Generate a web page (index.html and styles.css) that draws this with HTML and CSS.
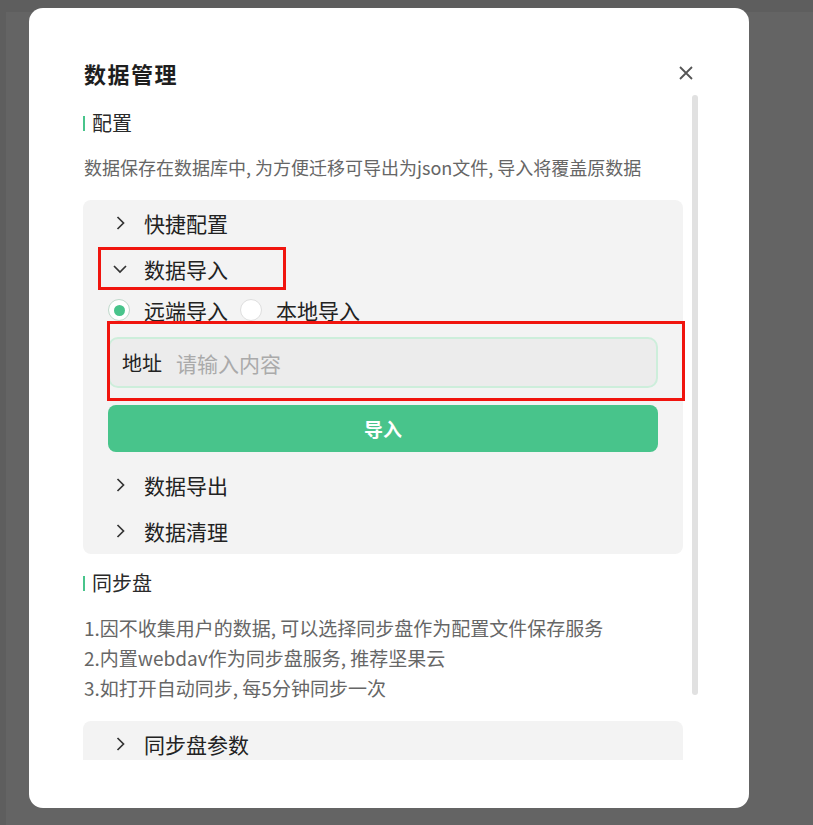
FILE: index.html
```html
<!DOCTYPE html>
<html>
<head>
  <meta charset="utf-8">
  <link rel="stylesheet" href="styles.css">
</head>
<body>
  <div class="page"></div>

  <div class="mask">
    <div class="modal">
      <div class="modal-header">
        <h1>数据管理</h1>
        <button class="close-btn" aria-label="close">
          <svg width="14" height="14" viewBox="0 0 14 14"><path d="M1 1L13 13M13 1L1 13" stroke="#555" stroke-width="1.8" fill="none"/></svg>
        </button>
      </div>

      <div class="modal-scroll">
        <div class="modal-body">
          <div class="section-title">配置</div>
          <p class="desc">数据保存在数据库中, 为方便迁移可导出为json文件, 导入将覆盖原数据</p>

          <div class="collapse">
            <div class="collapse-row">
              <svg class="chev" viewBox="0 0 16 16"><path d="M5.5 2L11.5 8L5.5 14" /></svg>
              <span>快捷配置</span>
            </div>
            <div class="collapse-row">
              <svg class="chev" viewBox="0 0 16 16"><path d="M2 5L8 11L14 5" /></svg>
              <span>数据导入</span>
            </div>
            <div class="collapse-content">
              <div class="radio-group">
                <label class="radio checked"><span class="dot"></span>远端导入</label>
                <label class="radio"><span class="dot"></span>本地导入</label>
              </div>
              <div class="input">
                <span class="input-label">地址</span>
                <span class="placeholder">请输入内容</span>
              </div>
              <button class="import-btn">导入</button>
            </div>
            <div class="collapse-row">
              <svg class="chev" viewBox="0 0 16 16"><path d="M5.5 2L11.5 8L5.5 14" /></svg>
              <span>数据导出</span>
            </div>
            <div class="collapse-row">
              <svg class="chev" viewBox="0 0 16 16"><path d="M5.5 2L11.5 8L5.5 14" /></svg>
              <span>数据清理</span>
            </div>

            <div class="mark mark-title"></div>
            <div class="mark mark-input"></div>
          </div>

          <div class="section-title sync">同步盘</div>
          <ol class="notes">
            <li>1.因不收集用户的数据, 可以选择同步盘作为配置文件保存服务</li>
            <li>2.内置webdav作为同步盘服务, 推荐坚果云</li>
            <li>3.如打开自动同步, 每5分钟同步一次</li>
          </ol>

          <div class="collapse last">
            <div class="collapse-row">
              <svg class="chev" viewBox="0 0 16 16"><path d="M5.5 2L11.5 8L5.5 14" /></svg>
              <span>同步盘参数</span>
            </div>
          </div>
        </div>

        <div class="scrollbar"><div class="thumb"></div></div>
      </div>
    </div>
  </div>
</body>
</html>
```

FILE: styles.css
```css
body {
  margin: 0;
  background: #5e5e5e;
  font-family: "Noto Sans CJK SC", "Noto Sans", sans-serif;
  color: #333;
  overflow: hidden;
}

.page {
  margin: 12px 0 0 6px;
  height: 100vh;
  background: #646464;
}

.mask {
  position: fixed;
  top: 0;
  left: 0;
  right: 0;
  bottom: 0;
}

.modal {
  margin: 8px 0 0 29px;
  width: 720px;
  height: 800px;
  box-sizing: border-box;
  padding: 0 51px 48px 54px;
  background: #fff;
  border-radius: 14px;
  display: flex;
  flex-direction: column;
}

.modal-header {
  display: flex;
  justify-content: space-between;
  align-items: center;
  padding-top: 51px;
  margin-bottom: 8px;
  height: 28px;
  box-sizing: content-box;
}

.modal-header h1 {
  margin: 0 0 0 1px;
  font-size: 22px;
  line-height: 28px;
  font-weight: 700;
  color: #1e1e1e;
  letter-spacing: 1.5px;
}

.close-btn {
  border: none;
  background: none;
  padding: 0;
  width: 24px;
  height: 24px;
  display: flex;
  align-items: center;
  justify-content: center;
  cursor: pointer;
}

/* content column + painted scrollbar */
.modal-scroll {
  flex: 1;
  display: flex;
  gap: 9px;
  overflow: hidden;
}

.modal-body {
  width: 600px;
  flex-shrink: 0;
  padding-top: 15px;
}

.scrollbar {
  width: 6px;
}

.scrollbar .thumb {
  height: 600px;
  background: #e1e1e1;
  border-radius: 3px;
}

.section-title {
  display: flex;
  align-items: center;
  font-size: 20px;
  line-height: 26px;
  color: #2a2a2a;
}

.section-title:before {
  content: "";
  width: 2px;
  height: 15px;
  background: #48c48b;
  margin-right: 7px;
}

.desc {
  margin: 19px 0 0 1px;
  font-size: 18px;
  line-height: 24px;
  color: #666;
  white-space: nowrap;
}

.collapse {
  position: relative;
  margin-top: 21px;
  background: #f3f3f3;
  border-radius: 8px;
}

.collapse-row {
  display: flex;
  align-items: center;
  height: 46px;
  padding-left: 29px;
  font-size: 21px;
  color: #222;
}

.chev {
  width: 16px;
  height: 16px;
  margin-right: 16px;
}

.chev path {
  fill: none;
  stroke: #333;
  stroke-width: 1.7;
}

.collapse-content {
  padding: 0 25px 10px 25px;
}

.radio-group {
  display: flex;
  align-items: center;
  height: 36px;
  gap: 12px;
}

.radio {
  display: flex;
  align-items: center;
  font-size: 21px;
  color: #222;
}

.radio .dot {
  width: 22px;
  height: 22px;
  box-sizing: border-box;
  border: 1px solid #dedede;
  border-radius: 50%;
  background: #fff;
  margin-right: 14px;
  display: flex;
  align-items: center;
  justify-content: center;
}

.radio.checked .dot {
  border-color: #bfd9cb;
}

.radio.checked .dot:after {
  content: "";
  width: 11px;
  height: 11px;
  border-radius: 50%;
  background: #48c48b;
}

.input {
  margin-top: 9px;
  height: 51px;
  box-sizing: border-box;
  border: 2px solid #cdeedb;
  border-radius: 10px;
  background: #ececec;
  display: flex;
  align-items: center;
  padding-left: 12px;
}

.input-label {
  font-size: 20px;
  color: #222;
  margin-right: 14px;
}

.placeholder {
  font-size: 21px;
  color: #aaa;
}

.import-btn {
  display: block;
  width: 550px;
  margin-top: 17px;
  height: 47px;
  border: none;
  border-radius: 8px;
  background: #48c48b;
  color: #fff;
  font-family: inherit;
  font-size: 19px;
  font-weight: 700;
  cursor: pointer;
}

.mark {
  position: absolute;
  border: 3px solid #f0140e;
  box-sizing: border-box;
}

.mark-title {
  left: 15px;
  top: 47px;
  width: 188px;
  height: 43px;
}

.mark-input {
  left: 24px;
  top: 121px;
  width: 578px;
  height: 80px;
}

.section-title.sync {
  margin-top: 16px;
}

.notes {
  list-style: none;
  margin: 17px 0 0 1px;
  padding: 0;
  font-size: 19px;
  line-height: 30px;
  color: #666;
}

.collapse.last {
  margin-top: 18px;
}
```
